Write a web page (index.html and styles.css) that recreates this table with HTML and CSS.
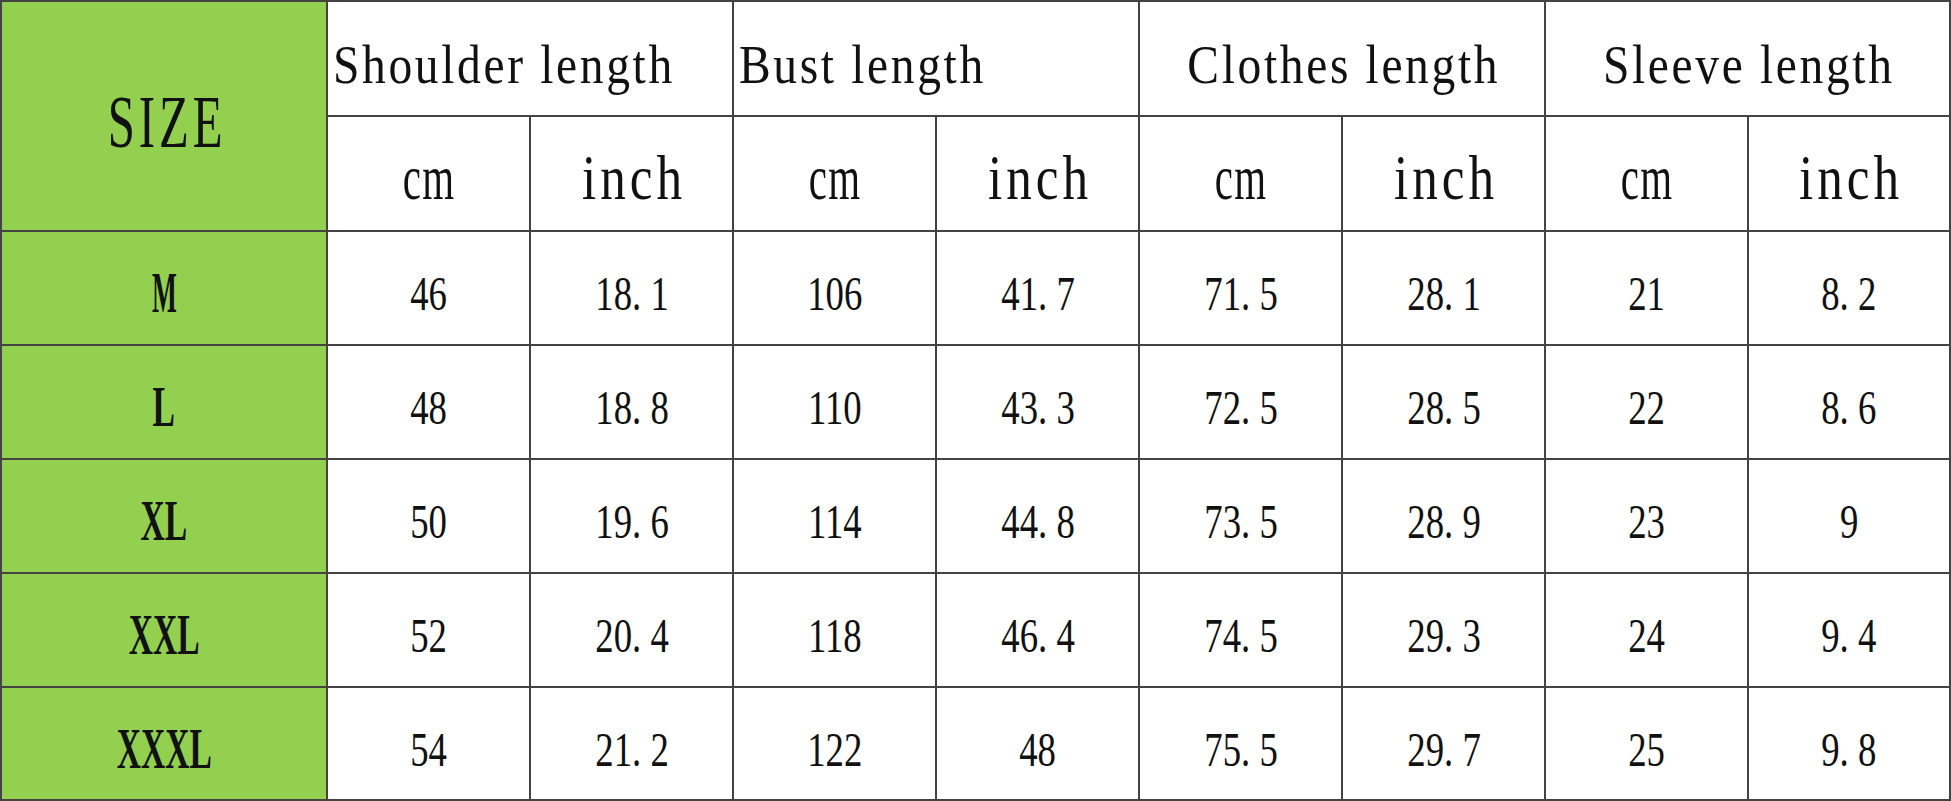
FILE: index.html
```html
<!DOCTYPE html>
<html lang="en">
<head>
<meta charset="utf-8">
<title>Size chart</title>
<link rel="stylesheet" href="styles.css">
</head>
<body>
<div class="chart">
  <div class="cell size-head"><span class="t t-size">SIZE</span></div>
  <div class="cell group group-left"><span class="g g-left">Shoulder length</span></div>
  <div class="cell group group-left"><span class="g g-left">Bust length</span></div>
  <div class="cell group"><span class="g">Clothes length</span></div>
  <div class="cell group"><span class="g">Sleeve length</span></div>

  <div class="cell unit"><span class="t t-cm">cm</span></div>
  <div class="cell unit"><span class="t t-inch">inch</span></div>
  <div class="cell unit"><span class="t t-cm">cm</span></div>
  <div class="cell unit"><span class="t t-inch">inch</span></div>
  <div class="cell unit"><span class="t t-cm">cm</span></div>
  <div class="cell unit"><span class="t t-inch">inch</span></div>
  <div class="cell unit"><span class="t t-cm">cm</span></div>
  <div class="cell unit"><span class="t t-inch">inch</span></div>

  <div class="cell label"><span class="t t-label t-m">M</span></div>
  <div class="cell num"><span class="t t-num">46</span></div>
  <div class="cell num"><span class="t t-num">18<span class="pt">.</span>1</span></div>
  <div class="cell num"><span class="t t-num">106</span></div>
  <div class="cell num"><span class="t t-num">41<span class="pt">.</span>7</span></div>
  <div class="cell num"><span class="t t-num">71<span class="pt">.</span>5</span></div>
  <div class="cell num"><span class="t t-num">28<span class="pt">.</span>1</span></div>
  <div class="cell num"><span class="t t-num">21</span></div>
  <div class="cell num"><span class="t t-num">8<span class="pt">.</span>2</span></div>

  <div class="cell label"><span class="t t-label">L</span></div>
  <div class="cell num"><span class="t t-num">48</span></div>
  <div class="cell num"><span class="t t-num">18<span class="pt">.</span>8</span></div>
  <div class="cell num"><span class="t t-num">110</span></div>
  <div class="cell num"><span class="t t-num">43<span class="pt">.</span>3</span></div>
  <div class="cell num"><span class="t t-num">72<span class="pt">.</span>5</span></div>
  <div class="cell num"><span class="t t-num">28<span class="pt">.</span>5</span></div>
  <div class="cell num"><span class="t t-num">22</span></div>
  <div class="cell num"><span class="t t-num">8<span class="pt">.</span>6</span></div>

  <div class="cell label"><span class="t t-label">XL</span></div>
  <div class="cell num"><span class="t t-num">50</span></div>
  <div class="cell num"><span class="t t-num">19<span class="pt">.</span>6</span></div>
  <div class="cell num"><span class="t t-num">114</span></div>
  <div class="cell num"><span class="t t-num">44<span class="pt">.</span>8</span></div>
  <div class="cell num"><span class="t t-num">73<span class="pt">.</span>5</span></div>
  <div class="cell num"><span class="t t-num">28<span class="pt">.</span>9</span></div>
  <div class="cell num"><span class="t t-num">23</span></div>
  <div class="cell num"><span class="t t-num">9</span></div>

  <div class="cell label"><span class="t t-label">XXL</span></div>
  <div class="cell num"><span class="t t-num">52</span></div>
  <div class="cell num"><span class="t t-num">20<span class="pt">.</span>4</span></div>
  <div class="cell num"><span class="t t-num">118</span></div>
  <div class="cell num"><span class="t t-num">46<span class="pt">.</span>4</span></div>
  <div class="cell num"><span class="t t-num">74<span class="pt">.</span>5</span></div>
  <div class="cell num"><span class="t t-num">29<span class="pt">.</span>3</span></div>
  <div class="cell num"><span class="t t-num">24</span></div>
  <div class="cell num"><span class="t t-num">9<span class="pt">.</span>4</span></div>

  <div class="cell label"><span class="t t-label">XXXL</span></div>
  <div class="cell num"><span class="t t-num">54</span></div>
  <div class="cell num"><span class="t t-num">21<span class="pt">.</span>2</span></div>
  <div class="cell num"><span class="t t-num">122</span></div>
  <div class="cell num"><span class="t t-num">48</span></div>
  <div class="cell num"><span class="t t-num">75<span class="pt">.</span>5</span></div>
  <div class="cell num"><span class="t t-num">29<span class="pt">.</span>7</span></div>
  <div class="cell num"><span class="t t-num">25</span></div>
  <div class="cell num"><span class="t t-num">9<span class="pt">.</span>8</span></div>
</div>
</body>
</html>
```

FILE: styles.css
```css
html, body {
  margin: 0;
  padding: 0;
  background: #ffffff;
}

body {
  width: 1951px;
  height: 801px;
  overflow: hidden;
  font-family: "Liberation Serif", "Times New Roman", serif;
  color: #111111;
}

.chart {
  display: grid;
  grid-template-columns: 324px repeat(7, 201px) 200px;
  grid-template-rows: 113px 113px 112px 112px 112px 112px 111px;
  gap: 2px;
  padding: 2px;
  background: #434343;
  width: 1951px;
  height: 801px;
  box-sizing: border-box;
}

.cell {
  background: #ffffff;
  display: flex;
  align-items: center;
  justify-content: center;
  line-height: 1;
  box-sizing: border-box;
  overflow: hidden;
  white-space: nowrap;
}

.t {
  display: inline-block;
  transform-origin: center center;
}

/* SIZE header */
.size-head {
  grid-row: span 2;
  background: #93d050;
  padding-top: 12px;
}
.t-size {
  font-size: 74px;
  letter-spacing: 6px;
  margin-right: -6px;
  transform: scaleX(0.66);
}

/* Group headers */
.group {
  grid-column: span 2;
  padding-top: 12px;
}
.group-left {
  justify-content: flex-start;
  padding-left: 5px;
}
.g {
  display: inline-block;
  font-size: 54px;
  letter-spacing: 3px;
  margin-right: -3px;
  transform: scaleX(0.88);
  transform-origin: center center;
}
.g-left {
  transform-origin: left center;
}

/* Units */
.unit {
  padding-top: 8px;
}
.t-cm {
  font-size: 64px;
  letter-spacing: 2px;
  margin-right: -2px;
  transform: scaleX(0.64);
}
.t-inch {
  font-size: 64px;
  letter-spacing: 5px;
  margin-right: -5px;
  transform: scaleX(0.8);
}

/* Size labels */
.label {
  background: #93d050;
  padding-top: 10px;
}
.t-label {
  font-size: 56px;
  font-weight: bold;
  transform: scaleX(0.6);
}
.t-m {
  transform: scaleX(0.47);
}

/* Numbers */
.num {
  padding-top: 11px;
}
.t-num {
  font-size: 49px;
  transform: scaleX(0.75);
}
.pt {
  margin-right: 0.25em;
}
```
